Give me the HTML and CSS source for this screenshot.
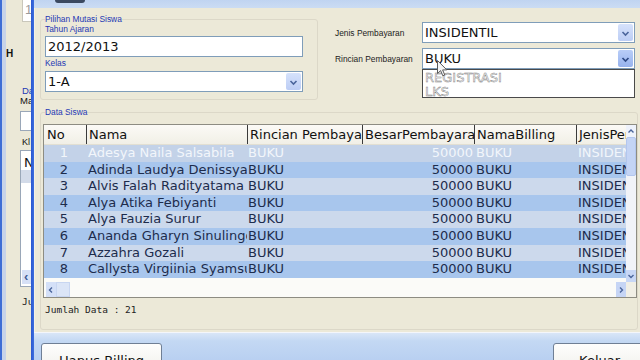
FILE: index.html
```html
<!DOCTYPE html>
<html>
<head>
<meta charset="utf-8">
<link rel="stylesheet" href="styles.css">
</head>
<body>
<div class="screen">
  <div class="bgwin">
    <div class="bg-edge"></div>
    <div class="bg-edge2"></div>
    <div class="bg-body">
      <div class="bg-tb1">1</div>
      <div class="bg-h">H</div>
      <div class="bg-da">Da</div>
      <div class="bg-ma">Ma</div>
      <div class="bg-tb2"></div>
      <div class="bg-kl">Kl</div>
      <div class="bg-list">
        <div class="bg-n">N</div>
        <div class="bg-row"></div>
        <div class="bg-fill"></div>
        <div class="bg-lt">&#8249;</div>
      </div>
      <div class="bg-ju">Ju</div>
    </div>
  </div>
  <div class="fborder"></div>
  <div class="front">
    <div class="titlebar"><div class="logo"></div></div>
    <div class="panel">
      <div class="top">
        <fieldset class="group group1">
          <legend>Pilihan Mutasi Siswa</legend>
          <div class="lbl">Tahun Ajaran</div>
          <div class="textbox">2012/2013</div>
          <div class="lbl lbl-kelas">Kelas</div>
          <div class="combo combo-kelas">
            <span class="combo-text">1-A</span>
            <span class="arrow"><svg width="15" height="18" viewBox="0 0 15 18"><path d="M4.5 8 L7.5 11 L10.5 8" fill="none" stroke="#4a659c" stroke-width="1.6"/></svg></span>
          </div>
        </fieldset>
        <div class="rightfields">
          <div class="frow">
            <div class="rlbl">Jenis Pembayaran</div>
            <div class="combo combo-r">
              <span class="combo-text">INSIDENTIL</span>
              <span class="arrow"><svg width="15" height="18" viewBox="0 0 15 18"><path d="M4.5 8 L7.5 11 L10.5 8" fill="none" stroke="#4a659c" stroke-width="1.6"/></svg></span>
            </div>
          </div>
          <div class="frow frow2">
            <div class="rlbl">Rincian Pembayaran</div>
            <div class="combo combo-r">
              <span class="combo-text">BUKU</span>
              <span class="arrow arrow-hot"><svg width="15" height="18" viewBox="0 0 15 18"><path d="M4.5 8 L7.5 11 L10.5 8" fill="none" stroke="#2f4a86" stroke-width="1.7"/></svg></span>
              <div class="droplist">
                <div class="ditem">REGISTRASI</div>
                <div class="ditem">LKS</div>
              </div>
              <svg class="cursor" width="12" height="17" viewBox="0 0 12 17"><path d="M0.5 0.5 L0.5 13.5 L3.6 10.6 L5.8 15.8 L7.8 15 L5.6 9.9 L9.8 9.9 Z" fill="#f4f4f4" stroke="#5a5a5a" stroke-width="1"/></svg>
            </div>
          </div>
        </div>
      </div>
      <fieldset class="group group2">
        <legend>Data Siswa</legend>
        <div class="grid">
          <div class="gmain">
            <div class="gtable">
              <div class="ghead">
                <div class="c c1">No</div>
                <div class="c c2">Nama</div>
                <div class="c c3">Rincian Pembayaran</div>
                <div class="c c4">BesarPembayaran</div>
                <div class="c c5">NamaBilling</div>
                <div class="c c6">JenisPembayaran</div>
              </div>
              <div class="grow sel">
                <div class="c c1">1</div><div class="c c2">Adesya Naila Salsabila</div><div class="c c3">BUKU</div><div class="c c4">50000</div><div class="c c5">BUKU</div><div class="c c6">INSIDENTIL</div>
              </div>
              <div class="grow even">
                <div class="c c1">2</div><div class="c c2">Adinda Laudya Denissya</div><div class="c c3">BUKU</div><div class="c c4">50000</div><div class="c c5">BUKU</div><div class="c c6">INSIDENTIL</div>
              </div>
              <div class="grow odd">
                <div class="c c1">3</div><div class="c c2">Alvis Falah Radityatama</div><div class="c c3">BUKU</div><div class="c c4">50000</div><div class="c c5">BUKU</div><div class="c c6">INSIDENTIL</div>
              </div>
              <div class="grow even">
                <div class="c c1">4</div><div class="c c2">Alya Atika Febiyanti</div><div class="c c3">BUKU</div><div class="c c4">50000</div><div class="c c5">BUKU</div><div class="c c6">INSIDENTIL</div>
              </div>
              <div class="grow odd">
                <div class="c c1">5</div><div class="c c2">Alya Fauzia Surur</div><div class="c c3">BUKU</div><div class="c c4">50000</div><div class="c c5">BUKU</div><div class="c c6">INSIDENTIL</div>
              </div>
              <div class="grow even">
                <div class="c c1">6</div><div class="c c2">Ananda Gharyn Sinulingga</div><div class="c c3">BUKU</div><div class="c c4">50000</div><div class="c c5">BUKU</div><div class="c c6">INSIDENTIL</div>
              </div>
              <div class="grow odd">
                <div class="c c1">7</div><div class="c c2">Azzahra Gozali</div><div class="c c3">BUKU</div><div class="c c4">50000</div><div class="c c5">BUKU</div><div class="c c6">INSIDENTIL</div>
              </div>
              <div class="grow even">
                <div class="c c1">8</div><div class="c c2">Callysta Virgiinia Syamsudin</div><div class="c c3">BUKU</div><div class="c c4">50000</div><div class="c c5">BUKU</div><div class="c c6">INSIDENTIL</div>
              </div>
            </div>
            <div class="vscroll">
              <div class="sbtn sbtn-up"><svg width="10" height="11" viewBox="0 0 10 11"><path d="M2.5 6.5 L5 4 L7.5 6.5" fill="none" stroke="#4a659c" stroke-width="1.4"/></svg></div>
              <div class="vthumb"></div>
              <div class="vtrack"></div>
              <div class="sbtn sbtn-down"><svg width="10" height="12" viewBox="0 0 10 12"><path d="M2.5 5 L5 7.5 L7.5 5" fill="none" stroke="#4a659c" stroke-width="1.4"/></svg></div>
            </div>
          </div>
          <div class="hscroll">
            <div class="hbtn"><svg width="10" height="12" viewBox="0 0 10 12"><path d="M6 3.5 L3.5 6 L6 8.5" fill="none" stroke="#4a659c" stroke-width="1.4"/></svg></div>
            <div class="hthumb"></div>
            <div class="htrack"></div>
            <div class="hbtn hbtn-r"><svg width="10" height="12" viewBox="0 0 10 12"><path d="M4 3.5 L6.5 6 L4 8.5" fill="none" stroke="#4a659c" stroke-width="1.4"/></svg></div>
            <div class="hcorner"></div>
          </div>
        </div>
        <div class="jumlah">Jumlah Data : 21</div>
      </fieldset>
    </div>
    <div class="footer">
      <div class="btn btn-hapus">Hapus Billing</div>
      <div class="btn btn-keluar">Keluar</div>
    </div>
  </div>
</div>
</body>
</html>
```

FILE: styles.css
```css
* { box-sizing: border-box; }
html, body { margin: 0; padding: 0; }
body { width: 640px; height: 360px; overflow: hidden; background: #ece9d8; font-family: "DejaVu Sans", Verdana, sans-serif; }

.screen { display: flex; width: 640px; height: 360px; overflow: hidden; }

/* background window */
.bgwin { width: 31px; flex: none; display: flex; height: 360px; }
.bg-edge { width: 2px; background: #3e6dd5; }
.bg-edge2 { width: 4px; background: #c7d3e9; }
.bg-body { flex: 1; background: #ebe8d7; overflow: hidden; font-family: "Liberation Sans", Arial, sans-serif; }
.bg-tb1 { height: 22px; width: 12px; margin-left: 16px; background: #fff; border: 1px solid #c9c7bb; border-top: none; font-size: 13px; line-height: 20px; color: #9a9a9a; padding-left: 2px; }
.bg-h { margin-top: 26px; height: 11px; line-height: 11px; font-size: 10px; font-weight: bold; color: #111; margin-left: 0; }
.bg-da { margin-top: 27px; height: 10px; line-height: 10px; font-size: 9.5px; color: #2438b4; margin-left: 16px; white-space: nowrap; }
.bg-ma { height: 10px; line-height: 10px; font-size: 9.5px; color: #111; margin-left: 14px; white-space: nowrap; }
.bg-tb2 { margin-top: 5px; height: 20px; margin-left: 14px; width: 14px; background: #fff; border: 1px solid #9aa7b8; border-right: none; }
.bg-kl { margin-top: 6px; height: 10px; line-height: 10px; font-size: 9px; color: #111; margin-left: 16px; }
.bg-list { margin-top: 3px; height: 137px; margin-left: 14px; width: 14px; background: #fff; border: 1px solid #9aa7b8; border-right: none; display: flex; flex-direction: column; }
.bg-n { height: 19px; padding-top: 4px; padding-left: 3px; font-family: "DejaVu Sans", sans-serif; font-size: 13px; line-height: 15px; color: #111; }
.bg-row { height: 13px; background: #d3dbe9; }
.bg-fill { flex: 1; }
.bg-lt { height: 14px; margin: 0 0 2px 1px; background: #d6e0f6; color: #3f5a94; font-size: 13px; line-height: 13px; padding-left: 2px; font-weight: bold; }
.bg-ju { margin-top: 10px; height: 10px; line-height: 10px; font-family: "DejaVu Sans Mono", monospace; font-size: 9.5px; color: #222; margin-left: 16px; white-space: nowrap; }

.fborder { width: 3px; flex: none; background: linear-gradient(90deg, #2a57cf, #3d6fe0); }

/* front window */
.front { flex: 1; display: flex; flex-direction: column; min-width: 0; }
.titlebar { height: 8px; flex: none; background: linear-gradient(#c0d4f1, #cbdcf3); }
.logo { margin-left: 21px; width: 30px; height: 3px; background: #3b4960; border-radius: 0 0 14px 14px; }

.panel { height: 324px; flex: none; background: #ece9d8; padding-top: 6px; border-left: 1px solid #f3f1e6; }

.top { display: flex; align-items: flex-start; }

.group { margin: 0; border: 1px solid #dcd8c8; border-radius: 3px; min-width: 0; }
.group legend { padding: 0; font-family: "Liberation Sans", Arial, sans-serif; font-size: 8.4px; line-height: 10px; color: #2438b4; }

.group1 { margin-left: 5px; width: 278px; padding: 0 14px 7px 4px; }
.lbl { height: 11px; line-height: 11px; font-family: "Liberation Sans", Arial, sans-serif; font-size: 8.4px; color: #2438b4; }
.lbl-kelas { margin-top: 1px; padding-top: 0; }

.textbox { margin-top: 1px; height: 21px; background: #fff; border: 1px solid #7f9db9; font-size: 13px; line-height: 19px; padding-left: 2px; color: #111; }

.combo { position: relative; display: flex; align-items: stretch; height: 21px; background: #fff; border: 1px solid #7f9db9; }
.combo-kelas { margin-top: 2px; }
.combo-text { flex: 1; font-size: 13px; line-height: 19px; padding-left: 2px; color: #111; }
.arrow { width: 15px; margin: 1px; background: linear-gradient(#d6e2fb, #bccdf5); border-radius: 2px; display: flex; align-items: center; justify-content: center; }
.arrow-hot { background: linear-gradient(#b9cdf8, #97b3ee); }

.rightfields { margin-left: 17px; margin-top: 8px; display: flex; flex-direction: column; }
.frow { display: flex; align-items: center; }
.frow2 { margin-top: 5px; }
.rlbl { width: 87px; flex: none; font-family: "Liberation Sans", Arial, sans-serif; font-size: 8.4px; color: #1c1c1c; }
.combo-r { width: 213px; }

.droplist { position: absolute; left: -1px; right: -1px; top: 20px; height: 29px; background: #fff; border: 1px solid #4a4a4a; padding-top: 1px; z-index: 5; }
.ditem { height: 13.5px; line-height: 13.5px; padding-left: 2px; font-size: 13px; color: #f6f6f6; -webkit-text-stroke: 0.45px #7c7c7c; }
.cursor { position: absolute; left: 14px; top: 11px; z-index: 6; }

.group2 { margin-left: 5px; margin-top: 7px; width: 598px; padding: 0 0 14px 2px; }
.group2 legend { margin-left: 2px; }

.grid { margin-top: 7px; width: 594px; height: 174px; border: 1px solid #8d8c82; background: #fbfbf8; display: flex; flex-direction: column; }
.gmain { display: flex; height: 157px; }
.gtable { width: 582px; display: flex; flex-direction: column; }
.ghead { display: flex; height: 20px; background: linear-gradient(#fbfaf6, #f1efe6); border-bottom: 1px solid #e2dfd2; }
.ghead .c { color: #111; line-height: 19px; }
.ghead .c + .c { border-left: 1px solid #3a3a3a; }
.ghead .c1 { text-align: left; padding-left: 3px; }
.ghead .c3 { padding-left: 2px; }
.c { flex: none; overflow: hidden; white-space: nowrap; font-size: 13px; padding-left: 2px; }
.c1 { width: 42px; text-align: center; padding-left: 0; padding-right: 2px; }
.c2 { width: 161px; }
.c3 { width: 115px; padding-left: 1px; }
.c4 { width: 112px; }
.grow .c4 { text-align: right; padding-right: 1px; }
.c5 { width: 102px; }
.c6 { width: 50px; }

.grow { display: flex; height: 16.6px; line-height: 16.6px; color: #1d2c4c; }
.grow.sel { background: #c3d2e8; color: #f2f6fb; }
.grow.even { background: #a8c6ed; }
.grow.odd { background: #ccd9ec; }

.vscroll { width: 10px; display: flex; flex-direction: column; background: #f1f3f8; }
.sbtn { height: 12px; display: flex; align-items: center; justify-content: center; }
.sbtn-up { background: #eef2fb; }
.sbtn-down { background: #c8d7f6; }
.vthumb { height: 39px; background: #c4d4f5; border: 1px solid #b3c6ee; border-radius: 2px; }
.vtrack { flex: 1; }

.hscroll { display: flex; height: 15px; align-items: stretch; background: #fbfbf8; padding-left: 2px; }
.hbtn { width: 10px; background: #d4e0f8; display: flex; align-items: center; justify-content: center; }
.hthumb { width: 14px; background: #dbe5f7; border: 1px solid #c8d6f1; }
.htrack { flex: 1; }
.hbtn-r { background: #c6d5f5; }
.hcorner { width: 10px; background: #f1efe6; }

.jumlah { margin-top: 7px; margin-left: 2px; height: 10px; line-height: 10px; font-family: "DejaVu Sans Mono", monospace; font-size: 9.5px; color: #222; }

.footer { flex: 1; display: flex; align-items: flex-start; padding: 10px 0 0 7px; background: linear-gradient(#d9e6f7, #c3d8f3 30%, #b9d0f1); border-top: 1px solid #f4f6fa; overflow: hidden; }
.btn { height: 28px; background: linear-gradient(#fefefd, #f1f1ec); border: 1px solid #6f7f95; border-radius: 3px; font-size: 13px; color: #111; padding-top: 9px; text-align: center; line-height: 15px; }
.btn-hapus { width: 121px; }
.btn-keluar { width: 92px; margin-left: auto; margin-right: -5px; padding-left: 25px; text-align: left; }
```
